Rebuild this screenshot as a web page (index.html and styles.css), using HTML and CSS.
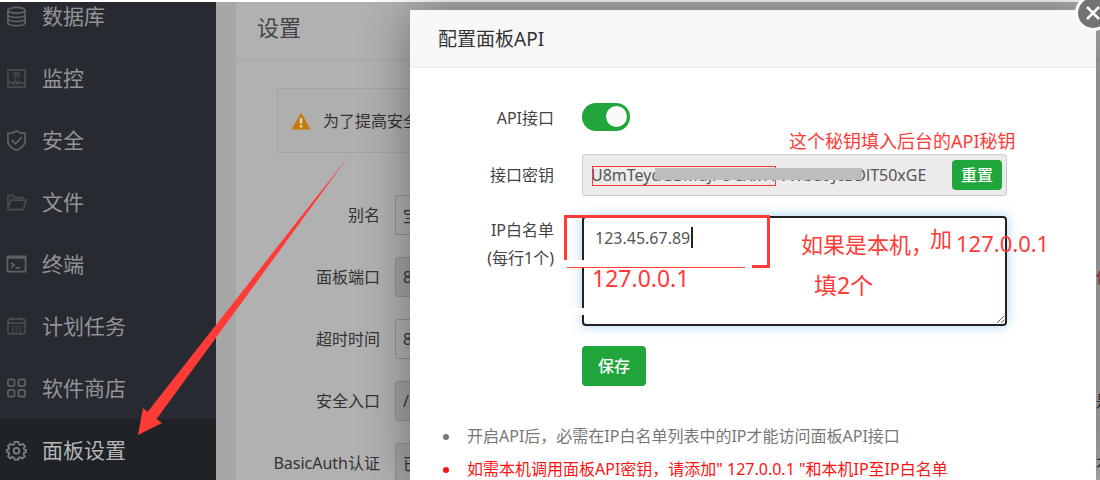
FILE: index.html
```html
<!DOCTYPE html>
<html lang="zh-CN">
<head>
<meta charset="utf-8">
<title>面板设置</title>
<link rel="stylesheet" href="styles.css">
</head>
<body>
<div class="app">
  <nav class="sidebar">
    <a class="nav-item" href="#"><svg class="icon" viewBox="0 0 22 22"><ellipse cx="11" cy="4.500" rx="9" ry="3"/><path d="M2 4.500v13c0 4 18 4 18 0v-13M2 9c0 4 18 4 18 0M2 13.200c0 4 18 4 18 0"/></svg>数据库</a>
    <a class="nav-item" href="#"><svg class="icon dim" viewBox="0 0 22 22"><path d="M2 2h18v18H2zM2 15h4l2 2 2-5 2 5 2-3 2 2h4M7.500 5.500h7M7.500 8h7"/></svg>监控</a>
    <a class="nav-item" href="#"><svg class="icon" viewBox="0 0 22 22"><path d="M11 1C8 3 5 3.500 2 3.500V12c0 4.500 5 7.500 9 9.500 4-2 9-5 9-9.500V3.500C17 3.500 14 3 11 1zM6 10.500l4 4 6.500-7"/></svg>安全</a>
    <a class="nav-item" href="#"><svg class="icon dim" viewBox="0 0 22 22"><path d="M2 17.500V3.500h5l2 2.500h9v2.500M2 18.500L5 8.500h16l-3 10z"/></svg>文件</a>
    <a class="nav-item" href="#"><svg class="icon" viewBox="0 0 22 22"><path d="M1.500 2.500h19v16h-19zM1.500 4h19M5.500 9l3 2.500-3 2.500M10 14.500h5"/></svg>终端</a>
    <a class="nav-item" href="#"><svg class="icon dim" viewBox="0 0 22 22"><rect x="2" y="3" width="18" height="16" rx="3"/><path d="M2 7.500h18M6.500 1v3M15.500 1v3"/><path stroke-dasharray="2 2" d="M6 11h11M6 14h11M6 17h11"/></svg>计划任务</a>
    <a class="nav-item" href="#"><svg class="icon" viewBox="0 0 22 22"><rect x="2" y="1.500" width="7" height="7" rx="2"/><rect x="13" y="1.500" width="7" height="7" rx="2"/><rect x="2" y="12.500" width="7" height="7" rx="2"/><rect x="13" y="12.500" width="7" height="7" rx="2"/></svg>软件商店</a>
    <a class="nav-item active" href="#"><svg class="icon" viewBox="0 0 22 22"><path d="M9 2h4l.6 2.600 1.700.7L17.600 4 20 6.500l-1.600 2.200.6 1.300 2 .3v2.400l-2 .5-.7 1.700 1.400 2.200-2.600 2.400-2.300-1.400-1.700.7L13 20.500H9l-.6-2-1.700-.7-2.300 1.400-2.300-2.400 1.400-2.200-.7-1.700-2-.5V10l2-.3.600-1.300L2 6.500 4.500 4l2.200 1.300 1.700-.7z"/><circle cx="11" cy="11.300" r="3"/></svg>面板设置</a>
  </nav>
  <main class="page">
    <section class="panel">
      <h1 class="panel-title">设置</h1>
      <div class="panel-body">
        <p class="alert"><svg class="warn" viewBox="0 0 20 18"><path fill="#c57b0b" d="M10 .5L19.500 17.500H.5z"/><path stroke="#e0d5c5" stroke-width="2.500" d="M10 6v5.500M10 13v2.500"/></svg>为了提高安全</p>
        <form class="settings">
          <div class="row"><label for="alias">别名</label><input id="alias" value="宝塔面板"></div>
          <div class="row"><label for="port">面板端口</label><input id="port" class="locked" value="8888" readonly><span class="hint red">值</span></div>
          <div class="row"><label for="timeout">超时时间</label><input id="timeout" value="86400"></div>
          <div class="row"><label for="entry">安全入口</label><input id="entry" class="locked" value="/entry" readonly><span class="hint">是</span></div>
          <div class="row"><label for="auth">BasicAuth认证</label><input id="auth" class="locked" value="已关闭" readonly><span class="hint">本</span></div>
        </form>
      </div>
    </section>
  </main>

  <section class="dialog" role="dialog" aria-labelledby="dialog-title">
    <button class="close" type="button" aria-label="关闭"><svg viewBox="0 0 16 16"><path d="M2 2l12 12M14 2L2 14"/></svg></button>
    <h2 class="dialog-title" id="dialog-title">配置面板API</h2>
    <form class="api-form">
      <label for="enabled">API接口</label>
      <input class="switch" id="enabled" type="checkbox" checked>
      <label for="token">接口密钥</label>
      <div class="token-box">
        <input id="token" value="U8mTeydGBMdJFOCXkY7YWbu9JcBDlT50xGE" readonly>
        <button class="btn reset" type="button">重置</button>
        <span class="token-mark"></span>
        <span class="mask"></span>
      </div>
      <label class="ip-label" for="ips">IP白名单<br>(每行1个)</label>
      <textarea id="ips">123.45.67.89</textarea>
      <button class="btn save" type="button">保存</button>
    </form>
    <ul class="notes">
      <li>开启API后，必需在IP白名单列表中的IP才能访问面板API接口</li>
      <li class="important">如需本机调用面板API密钥，请添加" 127.0.0.1 "和本机IP至IP白名单</li>
    </ul>
  </section>

  <svg class="marks" viewBox="0 0 1100 480">
    <defs><linearGradient id="fade" gradientUnits="userSpaceOnUse" x1="350" y1="154" x2="320" y2="193"><stop offset="0" stop-color="#fe3b37" stop-opacity=".6"/><stop offset="1" stop-color="#fe3b37"/></linearGradient></defs>
    <path fill="url(#fade)" d="M351 153L147.500 412 143 408 138 435 162 423 156.500 419z"/>
    <path fill="#fff" d="M562 260h24v8h-24zM560 308h25v7h-25z"/>
    <path fill="none" stroke="#fe3b37" stroke-width="3" d="M565.500 260V216.500H768.500V266.500H752"/>
    <path fill="#fe3b37" d="M567 267h178v1H567z"/>
    <path fill="#222" d="M691 227h2v21h-2z"/>
  </svg>
  <span class="note note-key">这个秘钥填入后台的API秘钥</span>
  <span class="note note-local">如果是本机，</span>
  <span class="note note-add">加</span>
  <span class="note note-loopback">127.0.0.1</span>
  <span class="note note-two">填2个</span>
  <span class="note note-second">127.0.0.1</span>
</div>
</body>
</html>
```
FILE: styles.css
```css
* { box-sizing: border-box; }
body {
  margin: 0;
  background: #fff;
  font: 16px/24px "Noto Sans", "Noto Sans CJK SC", sans-serif;
  color: #333;
}
input, textarea, button { font: inherit; color: inherit; }
.app {
  position: relative;
  display: grid;
  grid-template-columns: 216px 1fr;
  height: 100vh;
  padding-top: 2px;
  overflow: hidden;
}

.sidebar {
  background: #272b31;
  overflow: hidden;
  min-height: 0;
}
.nav-item {
  display: flex;
  align-items: center;
  gap: 15px;
  height: 62px;
  padding-left: 6px;
  font-size: 21px;
  color: #929497;
  text-decoration: none;
}
.nav-item:first-child { margin-top: -17px; }
.nav-item.active { background: #1f2226; color: #b5b6b8; }
.icon {
  width: 21px;
  height: 21px;
  fill: none;
  stroke: #5f6265;
  stroke-width: 1.8;
}
.icon.dim { stroke: #484b4f; }
.active .icon { stroke: #7d8082; }

.page {
  min-width: 0;
  min-height: 0;
  padding-left: 20px;
  background: #a7a7a7;
  overflow: hidden;
}
.panel { min-height: 100%; background: #b1b1b1; }
.panel-title {
  margin: 0;
  padding: 8px 21px 16px;
  border-bottom: 1px solid #a5a5a5;
  font-size: 22px;
  line-height: 34px;
  font-weight: 400;
  color: #444;
}
.panel-body { padding: 27px 0 0 41px; }
.alert {
  display: flex;
  align-items: center;
  gap: 12px;
  height: 65px;
  margin: 0 40px 42px 0;
  padding-left: 13px;
  border: 1px solid #a3a3a3;
  background: #afafaf;
}
.warn { width: 20px; height: 18px; }
.settings { display: grid; gap: 22px; }
.row {
  display: grid;
  grid-template-columns: 103px 1fr 4px;
  column-gap: 15px;
  align-items: center;
}
.row label { justify-self: end; white-space: nowrap; }
.row input {
  width: 100%;
  height: 40px;
  padding: 0 7px;
  border: 1px solid #8e8e8e;
  border-radius: 3px;
  background: #b1b1b1;
}
.row .locked { background: #a4a4a4; }
.row .hint { white-space: nowrap; }
.red { color: #b42424; }

.dialog {
  position: absolute;
  inset: 10px 4px 0 410px;
  background: #fff;
  border-radius: 2px 2px 0 0;
  box-shadow: 1px 1px 50px rgba(0, 0, 0, .4);
}
.dialog-title {
  margin: 0;
  padding: 15px 28px 14px;
  border-bottom: 1px solid #eee;
  background: #f7f7f7;
  font-size: 19px;
  line-height: 28px;
  font-weight: 400;
}
.close {
  position: absolute;
  top: -15px;
  right: -15px;
  display: grid;
  place-items: center;
  width: 36px;
  height: 36px;
  padding: 0;
  border: 3px solid #fff;
  border-radius: 50%;
  background: #737373;
}
.close svg { width: 16px; height: 16px; stroke: #fff; stroke-width: 2.5; }
.api-form {
  display: grid;
  grid-template-columns: 130px minmax(0, 425px);
  column-gap: 28px;
  row-gap: 20px;
  align-items: center;
  padding: 34px 14px 0;
  color: #444;
}
.api-form label { text-align: right; }
.switch {
  appearance: none;
  width: 48px;
  height: 28px;
  margin: 1px 0 3px;
  padding: 3px;
  border-radius: 14px;
  background: #20a53a;
}
.switch::before {
  content: "";
  display: block;
  width: 21px;
  height: 21px;
  margin-left: 21px;
  border-radius: 50%;
  background: #fafafa;
}
.token-box {
  position: relative;
  display: flex;
  align-items: center;
  height: 42px;
  padding: 0 4px 0 8px;
  border: 1px solid #ccc;
  border-radius: 3px;
  background: #ebebeb;
}
.token-box input {
  flex: 1;
  min-width: 0;
  padding: 0;
  border: 0;
  background: none;
  color: #555;
}
.token-mark {
  position: absolute;
  left: 9px;
  top: 11px;
  width: 184px;
  height: 20px;
  border: 1px solid #fe3b37;
}
.mask {
  position: absolute;
  left: 72px;
  top: 13px;
  width: 207px;
  height: 12px;
  background: #bdbdbd;
}
.btn {
  border: 0;
  border-radius: 4px;
  background: #20a53a;
  color: #fff;
  padding: 0;
}
.reset { width: 50px; height: 30px; font-weight: 500; }
.api-form .ip-label { align-self: start; line-height: 28px; }
textarea {
  display: block;
  width: 100%;
  height: 110px;
  padding: 8px 11px;
  border: 2px solid #222;
  border-radius: 4px;
  outline: 0;
  color: #555;
  box-shadow: 0 0 12px rgba(80, 165, 230, .5);
}
.save { grid-column: 2; width: 64px; height: 40px; font-weight: 500; }
.notes {
  margin: 34px 0 0;
  padding: 0 0 0 33px;
  list-style: none;
  line-height: 33px;
  color: #777;
  white-space: nowrap;
}
.notes li {
  display: flex;
  align-items: center;
  gap: 18px;
}
.notes li::before {
  content: "";
  width: 6px;
  height: 6px;
  border-radius: 50%;
  background: currentColor;
}
.notes .important { color: #f11; }

.marks {
  position: absolute;
  left: 0;
  top: 0;
  width: 1100px;
  height: 480px;
  pointer-events: none;
}
.note {
  position: absolute;
  color: #fe3b37;
  font-size: 22px;
  line-height: 30px;
  white-space: nowrap;
}
.note-key { left: 789px; top: 126px; font-size: 18px; }
.note-local { left: 801px; top: 229px; }
.note-add { left: 930px; top: 223px; }
.note-loopback { left: 956px; top: 228px; }
.note-two { left: 814px; top: 270px; font-size: 23px; }
.note-second { left: 592px; top: 263px; font-size: 23px; }
```
